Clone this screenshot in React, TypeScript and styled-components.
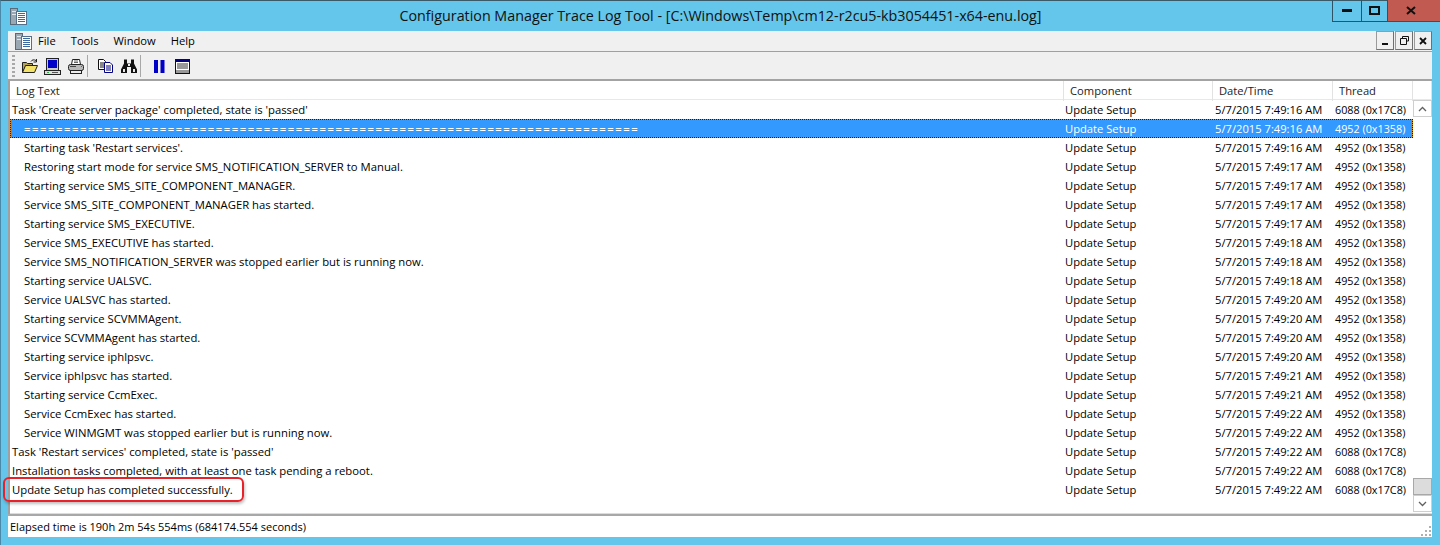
import React from "react";
import styled, { createGlobalStyle } from "styled-components";

const Global = createGlobalStyle`
  html, body { margin: 0; padding: 0; width: 1440px; height: 545px; overflow: hidden; background: #63c6ea; }
  * { box-sizing: border-box; }
`;

const FONT = `"Open Sans", "Noto Sans", "Liberation Sans", sans-serif`;

const Frame = styled.div`
  width: 1440px; height: 545px; display: flex; flex-direction: column;
  background: #63c6ea; border-top: 1px solid #3a5a68; border-left: 1px solid #4a8aa8;
  font-family: ${FONT}; font-size: 11.2px; color: #000;
  padding: 0 8px 8px 7px; position: relative;
`;
const TitleBar = styled.div`
  height: 30px; flex: none; display: flex; align-items: center; position: relative; margin-left: -7px; margin-right: -8px; padding-left: 9px;
`;
const Title = styled.div`
  position: absolute; left: 0; right: 0; top: 5px; text-align: center; font-size: 14.3px; line-height: 20px; color: #111;
`;
const WinButtons = styled.div`
  position: absolute; top: -1px; right: 0; height: 22px; display: flex;
  border-bottom: 1px solid #2e5364; border-left: 1px solid #2e5364;
`;
const WinBtn = styled.div<{ $w: number; $close?: boolean }>`
  width: ${p => p.$w}px; height: 21px; display: flex; align-items: center; justify-content: center;
  background: ${p => (p.$close ? "#c15a50" : "transparent")};
  border-left: ${p => (p.$close ? "1px solid #2e5364" : "none")};
  padding-right: ${p => (p.$close ? "7px" : "0")};
  & + & { border-left: 1px solid #2e5364; }
`;
const Client = styled.div`
  flex: 1; display: flex; flex-direction: column; background: #f0f0f0; min-height: 0;
`;
const MenuBar = styled.div`
  height: 21px; flex: none; display: flex; align-items: center; padding-left: 7px; position: relative;
  border-bottom: 1px solid #a0a0a0;
`;
const MenuIcon = styled.span`
  display: flex; margin-right: 6px;
`;
const MenuItem = styled.span`
  margin-right: 15px; font-size: 11.2px; line-height: 20px;
`;
const MdiButtons = styled.div`
  position: absolute; right: 0; top: 0; display: flex; gap: 1px; height: 19px;
`;
const MdiBtn = styled.div`
  width: 18px; height: 19px; background: #f0f0f0; border: 1px solid #707070; display: flex; align-items: center; justify-content: center;
  border-left-color: #9a9a9a; border-top-color: #9a9a9a;
`;
const ToolBar = styled.div`
  height: 29px; flex: none; display: flex; align-items: center; padding-left: 4px; gap: 0;
  border-bottom: 2px solid #a3a3a3;
`;
const Grip = styled.div`
  width: 3px; height: 22px; margin-right: 3px;
  background: repeating-linear-gradient(to bottom, #a8a8a8 0 2px, transparent 2px 4px);
`;
const ToolIcon = styled.div`
  width: 23px; height: 22px; display: flex; align-items: center; justify-content: center; padding-top: 1px;
`;
const Sep = styled.div<{ $after: number }>`
  width: 1px; height: 22px; background: #a8a8a8; margin: 0 ${p => p.$after}px 0 0;
`;
const ListArea = styled.div`
  flex: 1; display: flex; flex-direction: column; background: #fff; min-height: 0; border-left: 2px solid #a0a0a0; position: relative;
`;
const HeaderRow = styled.div`
  height: 19px; flex: none; display: grid; grid-template-columns: 1054px 149px 120px 80px 1fr; background: #fff;
  border-bottom: 1px solid #e8e8e8;
`;
const HeaderCell = styled.div`
  padding-left: 6px; line-height: 20px; font-size: 11.2px; color: #222; border-right: 1px solid #e2e2e2;
`;
const Body = styled.div`
  flex: 1; display: flex; min-height: 0; border-bottom: 1px solid #dcdcdc;
`;
const Rows = styled.div`
  width: 1403px; flex: none; display: flex; flex-direction: column;
`;
const Row = styled.div<{ $sel?: boolean }>`
  height: 19px; flex: none; display: grid; grid-template-columns: 1053px 150px 120px 80px;
  align-items: center; white-space: nowrap; line-height: 19px;
  background: ${p => (p.$sel ? "#3399ff" : "transparent")};
  color: ${p => (p.$sel ? "#fff" : "#000")};
  outline: ${p => (p.$sel ? "1px dotted #1a1a1a" : "none")};
  outline-offset: -1px;
  box-shadow: ${p => (p.$sel ? "inset 0 0 0 1px #d98a28" : "none")};
`;
const Cell = styled.div<{ $indent?: boolean }>`
  padding-left: ${p => (p.$indent ? "14px" : "2px")}; overflow: hidden; font-size: 11.3px;
`;
const Rule = styled.span`
  letter-spacing: 1.53px; font-weight: 600;
`;
const ValueCell = styled.div`
  padding-left: 2px; overflow: hidden;
`;
const ThreadCell = styled.div`
  padding-left: 2px; overflow: hidden; font-size: 10.8px;
`;
const Scrollbar = styled.div`
  flex: 1; display: flex; flex-direction: column; background: #fff; padding-bottom: 1px;
`;
const ScrollBtn = styled.div`
  height: 17px; flex: none; border: 1px solid #cfcfcf; display: flex; align-items: center; justify-content: center; background: #fff;
`;
const ScrollTrack = styled.div`
  flex: 1; display: flex; flex-direction: column; justify-content: flex-end; background: #fff;
`;
const ScrollThumb = styled.div`
  height: 17px; background: #dcdcdc; border: 1px solid #a8a8a8;
`;
const StatusBar = styled.div`
  height: 23px; flex: none; display: flex; align-items: center; padding-left: 2px; background: #fff;
  border-top: 2px solid #a8a8a8; font-size: 11px; position: relative;
`;
const ResizeGrip = styled.svg`
  position: absolute; right: 1px; bottom: 1px;
`;
const Callout = styled.div`
  position: absolute; left: 2px; top: 476px; width: 241px; height: 25px; border: 2px solid #e8222a; border-radius: 6px;
  box-shadow: 1px 2px 3px rgba(0,0,0,.25); pointer-events: none;
`;

const Doc = () => (
  <svg width="17" height="17" viewBox="0 0 17 17">
    <rect x="0.5" y="0.5" width="7" height="16" fill="#9aa8b4" stroke="#5a6a78" />
    <rect x="2" y="3" width="4" height="1" fill="#e0e6ea" />
    <rect x="2" y="6" width="4" height="1" fill="#e0e6ea" />
    <rect x="6.5" y="3.5" width="10" height="13" fill="#fff" stroke="#55708a" />
    {[5, 7, 9, 11, 13].map(y => <rect key={y} x="8" y={y} width="7" height="1" fill="#3a6aa0" />)}
  </svg>
);

const Folder = () => (
  <svg width="16" height="14" viewBox="0 0 16 14">
    <path d="M.5 3.500h4l1 1h5v2H4L.5 13.500z" fill="#b8a24a" stroke="#222" />
    <path d="M.5 13.500l3-7h12l-3 7z" fill="#f3e26a" stroke="#222" />
    <path d="M9 2.500c1-2 3-2 5-1M14.500 0v3h-3" fill="none" stroke="#222" />
  </svg>
);
const Computer = () => (
  <svg width="17" height="17" viewBox="0 0 17 17">
    <rect x="2.5" y="0.5" width="12" height="12" fill="#c8c8c8" stroke="#222" />
    <rect x="4" y="2" width="9" height="8" fill="#0000c8" />
    <rect x="0.5" y="12.500" width="16" height="4" fill="#ddd" stroke="#222" />
    <rect x="3" y="14" width="2" height="1" fill="#20b040" />
    <rect x="8" y="14" width="6" height="1" fill="#555" />
  </svg>
);
const Printer = () => (
  <svg width="16" height="15" viewBox="0 0 16 15">
    <path d="M4.500.5h7l1 5h-9z" fill="#fff" stroke="#222" />
    <path d="M6 2h4M6 3.500h4" stroke="#666" />
    <rect x="0.5" y="5.500" width="15" height="6" rx="2" fill="#b8b8b8" stroke="#222" />
    <rect x="2.500" y="11.500" width="11" height="3" fill="#eee" stroke="#222" />
    <rect x="2" y="7" width="6" height="1" fill="#444" />
    <rect x="13" y="7" width="1" height="1" fill="#0a0" />
  </svg>
);
const Copy = () => (
  <svg width="15" height="14" viewBox="0 0 15 14">
    <path d="M.5.5h5l2 2v8h-7z" fill="#fff" stroke="#111" />
    <path d="M2 4h4M2 6h4M2 8h4" stroke="#111" />
    <path d="M6.500 3.500h5.500l2.500 2.500v7.500h-8z" fill="#fff" stroke="#000080" />
    <path d="M8 7h5M8 9h5M8 11h5" stroke="#000080" />
  </svg>
);
const Binoculars = () => (
  <svg width="16" height="15" viewBox="0 0 16 15">
    <path d="M3 .5h3v4h4v-4h3v4l3 6v3.500h-6V8H6v6H0v-3.500l3-6z" fill="#111" />
    <rect x="2" y="10" width="2" height="3" fill="#e6e6e6" />
    <rect x="12" y="10" width="2" height="3" fill="#e6e6e6" />
    <rect x="7" y="5" width="2" height="2" fill="#f0f0f0" />
  </svg>
);
const Pause = () => (
  <svg width="11" height="13" viewBox="0 0 11 13">
    <rect x="0" y="0" width="4" height="13" fill="#0000c8" />
    <rect x="6.500" y="0" width="4" height="13" fill="#0000c8" />
  </svg>
);
const Panel = () => (
  <svg width="15" height="15" viewBox="0 0 15 15">
    <rect x="0.5" y="0.5" width="14" height="14" fill="#fff" stroke="#111" />
    <rect x="1" y="1" width="13" height="2" fill="#000080" />
    <path d="M2 5h11M2 7h11M2 9h11" stroke="#333" />
    <rect x="1" y="11" width="13" height="3" fill="#999" />
  </svg>
);

const rows: [string, boolean, string, string, boolean?][] = [
  ["Task 'Create server package' completed, state is 'passed'", false, "5/7/2015 7:49:16 AM", "6088 (0x17C8)"],
  ["=".repeat(77), true, "5/7/2015 7:49:16 AM", "4952 (0x1358)", true],
  ["Starting task 'Restart services'.", true, "5/7/2015 7:49:16 AM", "4952 (0x1358)"],
  ["Restoring start mode for service SMS_NOTIFICATION_SERVER to Manual.", true, "5/7/2015 7:49:17 AM", "4952 (0x1358)"],
  ["Starting service SMS_SITE_COMPONENT_MANAGER.", true, "5/7/2015 7:49:17 AM", "4952 (0x1358)"],
  ["Service SMS_SITE_COMPONENT_MANAGER has started.", true, "5/7/2015 7:49:17 AM", "4952 (0x1358)"],
  ["Starting service SMS_EXECUTIVE.", true, "5/7/2015 7:49:17 AM", "4952 (0x1358)"],
  ["Service SMS_EXECUTIVE has started.", true, "5/7/2015 7:49:18 AM", "4952 (0x1358)"],
  ["Service SMS_NOTIFICATION_SERVER was stopped earlier but is running now.", true, "5/7/2015 7:49:18 AM", "4952 (0x1358)"],
  ["Starting service UALSVC.", true, "5/7/2015 7:49:18 AM", "4952 (0x1358)"],
  ["Service UALSVC has started.", true, "5/7/2015 7:49:20 AM", "4952 (0x1358)"],
  ["Starting service SCVMMAgent.", true, "5/7/2015 7:49:20 AM", "4952 (0x1358)"],
  ["Service SCVMMAgent has started.", true, "5/7/2015 7:49:20 AM", "4952 (0x1358)"],
  ["Starting service iphlpsvc.", true, "5/7/2015 7:49:20 AM", "4952 (0x1358)"],
  ["Service iphlpsvc has started.", true, "5/7/2015 7:49:21 AM", "4952 (0x1358)"],
  ["Starting service CcmExec.", true, "5/7/2015 7:49:21 AM", "4952 (0x1358)"],
  ["Service CcmExec has started.", true, "5/7/2015 7:49:22 AM", "4952 (0x1358)"],
  ["Service WINMGMT was stopped earlier but is running now.", true, "5/7/2015 7:49:22 AM", "4952 (0x1358)"],
  ["Task 'Restart services' completed, state is 'passed'", false, "5/7/2015 7:49:22 AM", "6088 (0x17C8)"],
  ["Installation tasks completed, with at least one task pending a reboot.", false, "5/7/2015 7:49:22 AM", "6088 (0x17C8)"],
  ["Update Setup has completed successfully.", false, "5/7/2015 7:49:22 AM", "6088 (0x17C8)"],
];

export default function App() {
  return (
    <Frame>
      <Global />
      <TitleBar>
        <Doc />
        <Title>Configuration Manager Trace Log Tool - [C:\Windows\Temp\cm12-r2cu5-kb3054451-x64-enu.log]</Title>
        <WinButtons>
          <WinBtn $w={28}><svg width="10" height="3"><rect width="10" height="3" fill="#111" /></svg></WinBtn>
          <WinBtn $w={26}><svg width="11" height="9"><rect x="1" y="1" width="9" height="7" fill="none" stroke="#111" strokeWidth="2" /></svg></WinBtn>
          <WinBtn $w={53} $close><svg width="10" height="9"><path d="M1 1l8 7M9 1L1 8" stroke="#111" strokeWidth="2" /></svg></WinBtn>
        </WinButtons>
      </TitleBar>
      <Client>
        <MenuBar>
          <MenuIcon><Doc /></MenuIcon>
          <MenuItem>File</MenuItem>
          <MenuItem>Tools</MenuItem>
          <MenuItem>Window</MenuItem>
          <MenuItem>Help</MenuItem>
          <MdiButtons>
            <MdiBtn><svg width="7" height="9"><rect y="7" width="6" height="2" fill="#111" /></svg></MdiBtn>
            <MdiBtn><svg width="9" height="9"><path d="M2.500 2V.5h6V5H7M.5 2.500h6v6h-6z" fill="none" stroke="#111" /></svg></MdiBtn>
            <MdiBtn><svg width="8" height="8"><path d="M1 1l6 6M7 1L1 7" stroke="#111" strokeWidth="1.800" /></svg></MdiBtn>
          </MdiButtons>
        </MenuBar>
        <ToolBar>
          <Grip />
          <ToolIcon><Folder /></ToolIcon>
          <ToolIcon><Computer /></ToolIcon>
          <ToolIcon><Printer /></ToolIcon>
          <Sep $after={6} />
          <ToolIcon><Copy /></ToolIcon>
          <ToolIcon><Binoculars /></ToolIcon>
          <Sep $after={7} />
          <ToolIcon><Pause /></ToolIcon>
          <ToolIcon><Panel /></ToolIcon>
        </ToolBar>
        <ListArea>
          <HeaderRow>
            <HeaderCell>Log Text</HeaderCell>
            <HeaderCell>Component</HeaderCell>
            <HeaderCell>Date/Time</HeaderCell>
            <HeaderCell>Thread</HeaderCell>
            <HeaderCell />
          </HeaderRow>
          <Body>
            <Rows>
              {rows.map((r, i) => (
                <Row key={i} $sel={r[4]}>
                  <Cell $indent={r[1]}>{r[4] ? <Rule>{r[0]}</Rule> : r[0]}</Cell>
                  <ValueCell>Update Setup</ValueCell>
                  <ValueCell>{r[2]}</ValueCell>
                  <ThreadCell>{r[3]}</ThreadCell>
                </Row>
              ))}
            </Rows>
            <Scrollbar>
              <ScrollBtn><svg width="9" height="6"><path d="M1 5l3.500-3.500L8 5" fill="none" stroke="#606060" strokeWidth="1.300" /></svg></ScrollBtn>
              <ScrollTrack><ScrollThumb /></ScrollTrack>
              <ScrollBtn><svg width="9" height="6"><path d="M1 1l3.500 3.500L8 1" fill="none" stroke="#606060" strokeWidth="1.300" /></svg></ScrollBtn>
            </Scrollbar>
          </Body>
        </ListArea>
        <StatusBar>
          Elapsed time is 190h 2m 54s 554ms (684174.554 seconds)
          <ResizeGrip width="11" height="11" viewBox="0 0 11 11">
            {[[9,1],[9,5],[5,5],[9,9],[5,9],[1,9]].map(([x,y]) => <rect key={`${x}-${y}`} x={x} y={y} width="2" height="2" fill="#b0b0b0" />)}
          </ResizeGrip>
        </StatusBar>
      </Client>
      <Callout />
    </Frame>
  );
}
